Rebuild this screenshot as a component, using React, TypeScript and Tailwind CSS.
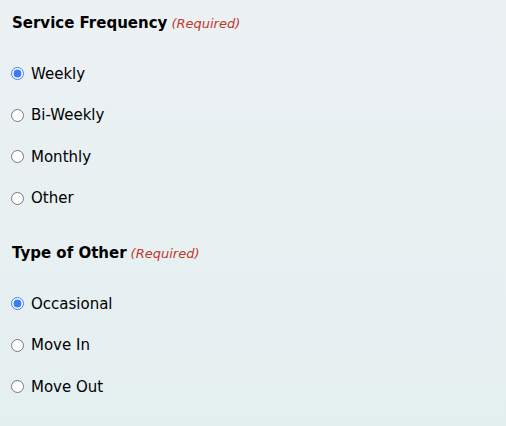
import { useState } from 'react'

interface Group { name: string; title: string; options: string[]; initial: string }

const groups: Group[] = [
  { name: 'frequency', title: 'Service Frequency', options: ['Weekly', 'Bi-Weekly', 'Monthly', 'Other'], initial: 'Weekly' },
  { name: 'other', title: 'Type of Other', options: ['Occasional', 'Move In', 'Move Out'], initial: 'Occasional' },
]

function RadioGroup({ group }: { group: Group }) {
  const [value, setValue] = useState(group.initial)
  return (
    <fieldset>
      <legend className="flex items-baseline h-5 leading-5 ml-px">
        <span className="font-bold text-[15px] text-black">{group.title}</span>
        <span className="italic text-[13px] text-[#c0392b] ml-1">(Required)</span>
      </legend>
      <div className="mt-[20px] flex flex-col">
        {group.options.map((opt) => (
          <label key={opt} className="flex items-center h-[41.5px] cursor-pointer">
            <input
              type="radio"
              name={group.name}
              checked={value === opt}
              onChange={() => setValue(opt)}
              className="w-[13px] h-[13px] accent-[#3b7cf6]"
            />
            <span className="ml-[7px] text-[15px] text-black">{opt}</span>
          </label>
        ))}
      </div>
    </fieldset>
  )
}

export default function App() {
  return (
    <div
      className="min-h-[426px] w-full bg-gradient-to-b from-[#ecf1f4] to-[#e4eff0] pl-[11px] pt-[13px]"
      style={{ fontFamily: '"DejaVu Sans", "Noto Sans", sans-serif' }}
    >
      <div className="flex flex-col gap-[24px]">
        {groups.map((g) => (
          <RadioGroup key={g.name} group={g} />
        ))}
      </div>
    </div>
  )
}
